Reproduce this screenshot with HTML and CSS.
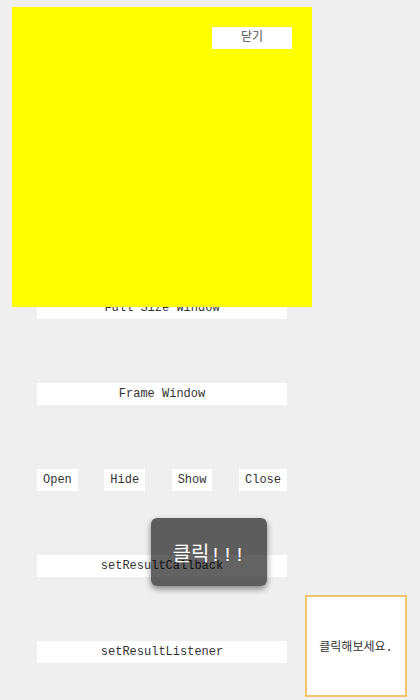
FILE: index.html
```html
<!DOCTYPE html>
<html lang="ko">
<head>
<meta charset="utf-8">
<title>Window</title>
<link rel="stylesheet" href="styles.css">
</head>
<body>
<div class="list">
  <button class="btn wide first">Full Size Window</button>
  <button class="btn wide">Frame Window</button>
  <div class="row">
    <button class="btn">Open</button>
    <button class="btn">Hide</button>
    <button class="btn">Show</button>
    <button class="btn">Close</button>
  </div>
  <button class="btn wide">setResultCallback</button>
  <button class="btn wide">setResultListener</button>
</div>
<div class="window">
  <button class="btn close">닫기</button>
</div>
<div class="toast">클릭!!!</div>
<div class="popup">클릭해보세요.</div>
</body>
</html>
```
FILE: styles.css
```css
html, body {
  margin: 0;
  padding: 0;
  background: #efefef;
  font-family: "Liberation Mono", "Noto Sans CJK KR", monospace;
  font-size: 12px;
  color: #333;
}
.list {
  display: flex;
  flex-direction: column;
  gap: 64px;
  width: 250px;
  padding: 297px 0 0 37px;
}
.first {
  margin-bottom: 1px;
}
.btn {
  border: 0;
  background: #fff;
  height: 22px;
  padding: 0 6px;
  margin: 0;
  font-family: "Liberation Mono", "Noto Sans CJK KR", monospace;
  font-size: 12px;
  color: #333;
  line-height: 22px;
}
.wide {
  width: 250px;
}
.row {
  display: flex;
  justify-content: space-between;
}
.window {
  position: absolute;
  left: 12px;
  top: 7px;
  width: 300px;
  height: 300px;
  background: #ffff00;
}
.close {
  position: absolute;
  left: 200px;
  top: 20px;
  width: 80px;
  color: #555;
}
.toast {
  position: absolute;
  left: 151px;
  top: 518px;
  width: 116px;
  height: 68px;
  border-radius: 6px;
  background: rgba(0, 0, 0, 0.61);
  box-shadow: 0 3px 6px rgba(0, 0, 0, 0.45);
  color: #fff;
  font-size: 20px;
  display: flex;
  align-items: center;
  justify-content: center;
}
.popup {
  position: absolute;
  left: 305px;
  top: 595px;
  width: 102px;
  height: 102px;
  box-sizing: border-box;
  border: 2px solid #f0c36d;
  background: #fff;
  display: flex;
  align-items: center;
  justify-content: center;
  color: #333;
}
```
